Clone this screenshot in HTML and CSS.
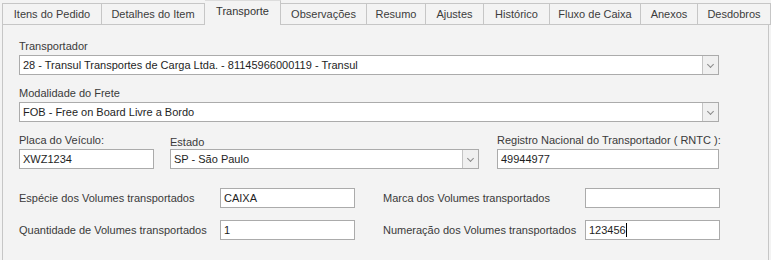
FILE: index.html
```
<!DOCTYPE html>
<html lang="pt-BR">
  <head>
    <meta charset="UTF-8" />
    <meta name="viewport" content="width=device-width, initial-scale=1.0" />
    <title>Pedido - Transporte</title>
    <link rel="stylesheet" href="styles.css">
  </head>

  <body>
    <div class="tabs">
      <div class="tab t-itens">Itens do Pedido</div>
      <div class="tab t-detalhes">Detalhes do Item</div>
      <div class="tab t-transporte active">Transporte</div>
      <div class="tab t-obs">Observações</div>
      <div class="tab t-resumo">Resumo</div>
      <div class="tab t-ajustes">Ajustes</div>
      <div class="tab t-hist">Histórico</div>
      <div class="tab t-fluxo">Fluxo de Caixa</div>
      <div class="tab t-anexos">Anexos</div>
      <div class="tab t-desd">Desdobros</div>
    </div>

    <div class="panel">
      <!-- Transportador -->
      <div class="field">
        <label>Transportador</label>
        <div class="combo wide">
          <span class="value">28 - Transul Transportes de Carga Ltda. - 81145966000119 - Transul</span>
          <span class="drop"><i></i></span>
        </div>
      </div>

      <!-- Modalidade -->
      <div class="field">
        <label>Modalidade do Frete</label>
        <div class="combo wide">
          <span class="value">FOB - Free on Board Livre a Bordo</span>
          <span class="drop"><i></i></span>
        </div>
      </div>

      <div class="row">
        <div class="field placa">
          <label>Placa do Veículo:</label>
          <div class="edit">XWZ1234</div>
        </div>
        <div class="field estado">
          <label class="low">Estado</label>
          <div class="combo">
            <span class="value">SP - São Paulo</span>
            <span class="drop"><i></i></span>
          </div>
        </div>
        <div class="field rntc">
          <label>Registro Nacional do Transportador ( RNTC ):</label>
          <div class="edit">49944977</div>
        </div>
      </div>

      <!-- Volumes -->
      <div class="volumes">
        <span class="vlabel">Espécie dos Volumes transportados</span>
        <div class="edit small">CAIXA</div>
        <span class="vlabel">Marca dos Volumes transportados</span>
        <div class="edit small"></div>

        <span class="vlabel">Quantidade de Volumes transportados</span>
        <div class="edit small">1</div>
        <span class="vlabel">Numeração dos Volumes transportados</span>
        <div class="edit small">123456<span class="caret"></span></div>
      </div>
    </div>
  </body>
</html>
```

FILE: styles.css
```
body {
  font-family: "Liberation Sans", Arial, sans-serif;
  font-size: 11px;
  background-color: #f3f3f3;
  color: #333;
  margin: 0;
  padding: 0;
  height: 260px;
  overflow: hidden;
}

/* abas */
.tabs {
  display: flex;
  align-items: flex-end;
  height: 25px;
  padding-left: 2px;
  box-sizing: border-box;
}

.tab {
  height: 22px;
  box-sizing: border-box;
  border: 1px solid #c6c6c6;
  border-left: none;
  background-color: #f3f3f3;
  color: #3c3c3c;
  text-align: center;
  line-height: 20px;
}

.tab.t-itens {
  border-left: 1px solid #c6c6c6;
  width: 100px;
}
.t-detalhes { width: 103px; }
.t-transporte { width: 76px; }
.t-obs { width: 86px; }
.t-resumo { width: 59px; }
.t-ajustes { width: 58px; }
.t-hist { width: 66px; }
.t-fluxo { width: 91px; }
.t-anexos { width: 57px; }
.t-desd { width: 73px; }

.tab.active {
  height: 25px;
  border-top: 1px solid #dcdcdc;
  border-bottom: none;
  line-height: 21px;
  color: #333;
}

/* painel */
.panel {
  border-left: 1px solid #c6c6c6;
  border-right: 1px solid #c6c6c6;
  margin-left: 2px;
  width: 767px;
  height: 235px;
  box-sizing: border-box;
  padding: 14px 0 0 16px;
}

.field label {
  display: block;
  line-height: 15px;
  height: 15px;
  margin-bottom: 1px;
  color: #3a3a3a;
  white-space: nowrap;
}

.field label.low {
  padding-top: 2px;
  margin-bottom: -1px;
}

.field {
  margin-bottom: 11px;
}

.combo,
.edit {
  height: 20px;
  box-sizing: border-box;
  border: 1px solid #ababab;
  background-color: white;
  color: #1e1e1e;
  line-height: 18px;
  padding-left: 3px;
  white-space: nowrap;
}

.combo {
  display: flex;
}

.combo.wide {
  width: 700px;
}

.combo .value {
  flex: 1;
  overflow: hidden;
}

.combo .drop {
  width: 16px;
  height: 18px;
  box-sizing: border-box;
  border-left: 1px solid #c4c4c4;
  background-color: #f0f0f0;
  display: flex;
  justify-content: center;
  align-items: center;
}

.combo .drop i {
  width: 4px;
  height: 4px;
  border-right: 1.5px solid #8a8a8a;
  border-bottom: 1.5px solid #8a8a8a;
  transform: rotate(45deg);
  margin-top: -2px;
}

.row {
  display: flex;
}

.row .field {
  margin-bottom: 0;
}

.placa {
  width: 135px;
  margin-right: 16px;
}

.estado {
  width: 309px;
  margin-right: 18px;
}

.rntc {
  width: 222px;
}

/* volumes */
.volumes {
  display: grid;
  grid-template-columns: 201px 163px 202px 134px;
  grid-auto-rows: 20px;
  row-gap: 12px;
  margin-top: 19px;
  align-items: center;
}

.volumes .vlabel {
  color: #3a3a3a;
  white-space: nowrap;
}

.volumes .edit.small {
  width: 135px;
}

.caret {
  display: inline-block;
  width: 1px;
  height: 14px;
  background-color: black;
  vertical-align: -3px;
}
```
